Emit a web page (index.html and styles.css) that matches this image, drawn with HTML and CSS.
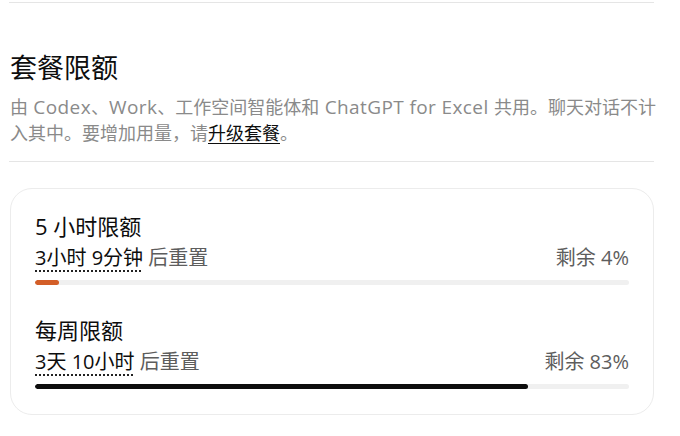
FILE: index.html
```html
<!DOCTYPE html>
<html lang="zh-CN">
<head>
<meta charset="utf-8">
<title>套餐限额</title>
<link rel="stylesheet" href="styles.css">
</head>
<body>
<div class="page">
  <div class="prev-section"></div>
  <h2 class="title">套餐限额</h2>
  <p class="desc">由<span class="latin"> Codex</span>、<span class="latin">Work</span>、工作空间智能体和<span class="latin"> ChatGPT for Excel </span>共用。聊天对话不计入其中。要增加用量，请<a class="link" href="#">升级套餐</a>。</p>
  <div class="divider"></div>
  <div class="card">
    <div class="limit">
      <div class="label">5 小时限额</div>
      <div class="meta">
        <span class="reset"><span class="time">3小时 9分钟</span> 后重置</span>
        <span class="remain">剩余 4%</span>
      </div>
      <div class="bar"><div class="fill orange" style="width:4%"></div></div>
    </div>
    <div class="limit">
      <div class="label">每周限额</div>
      <div class="meta">
        <span class="reset"><span class="time">3天 10小时</span> 后重置</span>
        <span class="remain">剩余 83%</span>
      </div>
      <div class="bar"><div class="fill dark" style="width:83%"></div></div>
    </div>
  </div>
</div>
</body>
</html>
```
FILE: styles.css
```css
html, body {
  margin: 0;
  padding: 0;
  background: #ffffff;
}
body {
  font-family: "Open Sans", "Noto Sans", "Noto Sans CJK SC", sans-serif;
  color: #0d0d0d;
}
.page {
  padding-left: 10px;
  width: 644px;
}
.prev-section {
  height: 2px;
  border-bottom: 1px solid #e5e5e5;
  margin-left: -1px;
}
.title {
  margin: 47px 0 0;
  font-size: 27px;
  line-height: 36px;
  font-weight: 400;
}
.desc {
  margin: 8px 0 0;
  width: 662px;
  font-size: 18px;
  line-height: 26px;
  color: #8a8a8a;
}
.latin {
  font-size: 19px;
  line-height: 26px;
  letter-spacing: 0.4px;
}
.link {
  color: #0d0d0d;
  text-decoration: underline;
  text-underline-offset: 3px;
}
.divider {
  margin-top: 15px;
  border-top: 1px solid #e5e5e5;
  margin-left: -1px;
}
.card {
  margin-top: 26px;
  border: 1px solid #ececec;
  border-radius: 22px;
  padding: 23px 24px 25px;
  display: flex;
  flex-direction: column;
  gap: 31px;
}
.label {
  font-size: 22px;
  line-height: 28px;
}
.meta {
  margin-top: 4px;
  display: flex;
  justify-content: space-between;
  font-size: 20px;
  line-height: 28px;
  color: #5d5d5d;
}
.time {
  color: #0d0d0d;
  text-decoration: underline dotted #222;
  text-decoration-thickness: 2px;
  text-underline-offset: 5px;
}
.bar {
  margin-top: 8px;
  height: 5px;
  border-radius: 3px;
  background: #f0f0f0;
  overflow: hidden;
}
.fill {
  height: 100%;
  border-radius: 3px;
}
.orange { background: #d35e28; }
.dark { background: #0d0d0d; }
```
